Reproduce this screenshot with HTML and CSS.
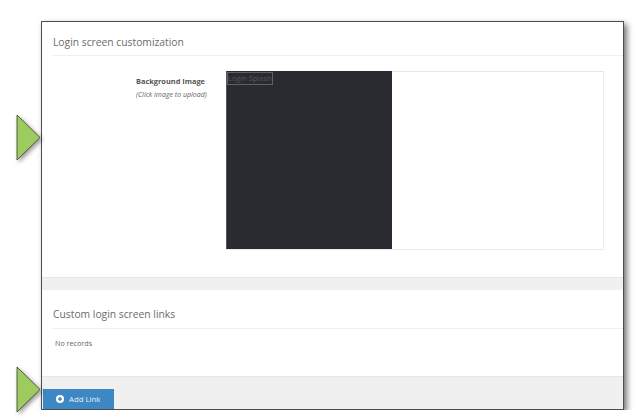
FILE: index.html
```html
<!DOCTYPE html>
<html lang="en">
<head>
  <meta charset="UTF-8" />
  <title>Login screen customization</title>
  <link rel="stylesheet" href="styles.css">
</head>
<body>
  <svg class="arrow arrow-top" width="26" height="48" viewBox="0 0 26 48">
    <path d="M1 1 L24 23.5 L1 46 Z" fill="#9ecb5f" stroke="#39402c" stroke-width="0.8"/>
  </svg>
  <svg class="arrow arrow-bottom" width="26" height="48" viewBox="0 0 26 48">
    <path d="M1 1 L24 23.5 L1 46 Z" fill="#9ecb5f" stroke="#39402c" stroke-width="0.8"/>
  </svg>

  <div class="frame">
    <section class="panel panel-top">
      <h2 class="panel-title">Login screen customization</h2>
      <div class="field">
        <div class="field-label">
          <strong>Background Image</strong>
          <em>(Click image to upload)</em>
        </div>
        <div class="image-box">
          <div class="splash">
            <span class="splash-alt">Login Splash</span>
          </div>
        </div>
      </div>
    </section>

    <div class="band"></div>

    <section class="panel panel-links">
      <h2 class="panel-title">Custom login screen links</h2>
      <p class="no-records">No records</p>
    </section>

    <div class="footer">
      <button class="add-button">
        <svg width="8" height="8" viewBox="0 0 10 10">
          <circle cx="5" cy="5" r="5" fill="#fff"/>
          <path d="M5 2.5 V7.5 M2.5 5 H7.5" stroke="#3d87c5" stroke-width="1.8"/>
        </svg>
        Add Link
      </button>
    </div>
  </div>
</body>
</html>
```

FILE: styles.css
```css
body {
  margin: 0;
  background-color: white;
  font-family: 'Open Sans', sans-serif;
  color: #555;
  overflow: hidden;
}
.frame {
  display: flex;
  flex-direction: column;
  box-sizing: border-box;
  width: 583px;
  height: 389px;
  margin: 21px 0 0 41px;
  background-color: white;
  border: 1px solid #4d4d4d;
  box-shadow: 3px 3px 6px rgba(0,0,0,0.55);
}
.arrow {
  position: absolute;
  left: 16px;
  filter: drop-shadow(2px 2px 2px rgba(0,0,0,0.4));
}
.arrow-top {
  top: 114px;
}
.arrow-bottom {
  top: 366px;
}
.panel {
  padding-left: 11px;
}
.panel-top {
  height: 255px;
}
.panel-links {
  flex: 1;
}
.panel-title {
  margin: 0;
  height: 34px;
  box-sizing: border-box;
  font-size: 10.3px;
  line-height: 16px;
  font-weight: 400;
  color: #6b6b6b;
  border-bottom: 1px solid #efefef;
}
.panel-top .panel-title {
  padding-top: 12px;
}
.panel-links .panel-title {
  height: 39px;
  padding-top: 16px;
}
.field {
  display: flex;
  margin-top: 15px;
}
.field-label {
  width: 173px;
  padding: 4px 0 0 83px;
  box-sizing: border-box;
}
.field-label strong {
  display: block;
  font-size: 7.4px;
  line-height: 12px;
  color: #555;
}
.field-label em {
  display: block;
  margin-top: 2px;
  font-size: 7px;
  line-height: 11px;
  color: #666;
}
.image-box {
  width: 378px;
  height: 179px;
  box-sizing: border-box;
  border: 1px solid #ececec;
  border-top-color: #e6e6e6;
}
.splash {
  width: 166px;
  height: 178px;
  margin-top: -1px;
  margin-left: -1px;
  background-color: #2a2b30;
  border-left: 1px solid #555;
  padding-top: 1px;
  box-sizing: border-box;
}
.splash-alt {
  display: block;
  width: 46px;
  height: 13px;
  box-sizing: border-box;
  border: 1px solid #5f6065;
  font-size: 7.4px;
  line-height: 11px;
  white-space: nowrap;
  color: #55565a;
}
.band {
  height: 12px;
  background-color: #f0f0f0;
  border-top: 1px solid #e6e6e6;
}
.no-records {
  margin: 8px 0 0 2px;
  font-size: 7.2px;
  line-height: 12px;
  color: #666;
}
.footer {
  display: flex;
  align-items: flex-end;
  height: 33px;
  padding-left: 1px;
  box-sizing: border-box;
  background-color: #f0f0f0;
  border-top: 1px solid #e6e6e6;
}
.add-button {
  display: flex;
  align-items: center;
  gap: 5px;
  width: 71px;
  height: 20px;
  padding: 0 0 0 13px;
  border: none;
  background-color: #3d87c5;
  color: #e8f0f7;
  font-family: 'Open Sans', sans-serif;
  font-size: 7.8px;
  font-weight: 400;
}
```
